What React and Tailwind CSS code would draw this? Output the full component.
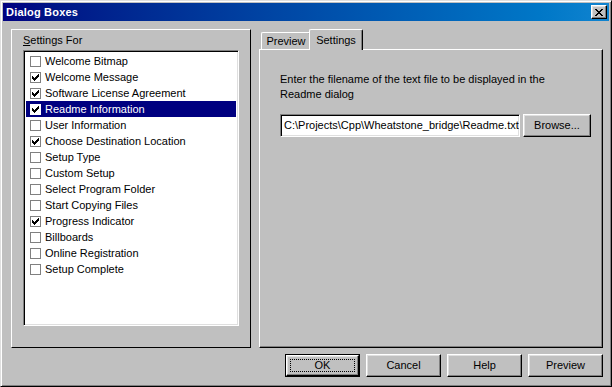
import React from 'react'

const items = [
  ['Welcome Bitmap', false],
  ['Welcome Message', true],
  ['Software License Agreement', true],
  ['Readme Information', true],
  ['User Information', false],
  ['Choose Destination Location', true],
  ['Setup Type', false],
  ['Custom Setup', false],
  ['Select Program Folder', false],
  ['Start Copying Files', false],
  ['Progress Indicator', true],
  ['Billboards', false],
  ['Online Registration', false],
  ['Setup Complete', false],
]

const raised = 'border border-t-white border-l-white border-r-black border-b-black shadow-[inset_-1px_-1px_#808080,inset_1px_1px_#dfdfdf]'
const sunken = 'border border-t-[#808080] border-l-[#808080] border-r-white border-b-white shadow-[inset_1px_1px_#000,inset_-1px_-1px_#dfdfdf]'

// 7x7 pixel checkmark, classic style
function Check({ color }) {
  const px = [
    [6, 0], [5, 1], [6, 1], [0, 2], [4, 2], [5, 2], [6, 2],
    [0, 3], [1, 3], [3, 3], [4, 3], [5, 3],
    [0, 4], [1, 4], [2, 4], [3, 4], [4, 4],
    [1, 5], [2, 5], [3, 5], [2, 6],
  ]
  return (
    <svg width="7" height="7" viewBox="0 0 7 7" shapeRendering="crispEdges">
      {px.map(([x, y]) => <rect key={x + '-' + y} x={x} y={y} width="1" height="1" fill={color} />)}
    </svg>
  )
}

function Row({ label, checked, selected }) {
  return (
    <div className={`h-[16px] flex items-center pl-[4px] gap-[4px] ${selected ? 'bg-[#000080] text-white' : 'text-black'}`}>
      <span className={`w-[11px] h-[11px] border bg-white flex items-center justify-center shrink-0 ${selected ? 'border-white' : 'border-[#808080]'}`}>
        {checked && <Check color="#000" />}
      </span>
      <span className="whitespace-nowrap leading-[16px]">{label}</span>
    </div>
  )
}

function Button({ children, width, isDefault }) {
  if (isDefault) {
    return (
      <div className={`h-[23px] border border-black ${width}`}>
        <div className={`h-full ${raised} flex items-center justify-center p-[3px]`}>
          <div className="w-full h-full border border-dotted border-black flex items-center justify-center">{children}</div>
        </div>
      </div>
    )
  }
  return (
    <div className={`h-[23px] ${raised} ${width} flex items-center justify-center`}>{children}</div>
  )
}

export default function App() {
  return (
    <div
      className="w-[612px] h-[387px] bg-[#c0c0c0] border border-t-[#dfdfdf] border-l-[#dfdfdf] border-r-black border-b-black shadow-[inset_1px_1px_#fff,inset_-1px_-1px_#808080] p-[2px] flex flex-col text-[11px] text-black"
      style={{ fontFamily: '"Liberation Sans", Arial, sans-serif' }}
    >
      {/* Title bar */}
      <div className="h-[18px] bg-linear-to-r from-[#000080] to-[#1084d0] flex items-center justify-between pl-[3px] pr-[2px]">
        <span className="text-white font-bold text-[11px] tracking-[0.2px]">Dialog Boxes</span>
        <div className={`w-[16px] h-[14px] ${raised} bg-[#c0c0c0] flex items-center justify-center`}>
          <svg width="8" height="7" viewBox="0 0 8 7" shapeRendering="crispEdges">
            <path d="M0 0h2v1h1v1h2v-1h1v-1h2v1h-1v1h-1v1h-1v1h1v1h1v1h1v1h-2v-1h-1v-1h-2v1h-1v1h-2v-1h1v-1h1v-1h1v-1h-1v-1h-1v-1h-1z" fill="#000" />
          </svg>
        </div>
      </div>

      <div className="flex flex-col pl-[8px] pr-[6px] pt-[8px]">
        <div className="flex gap-[8px]">
          {/* Settings For group */}
          <div className="w-[240px] h-[319px] border border-t-white border-l-white border-r-black border-b-black pl-[11px] pt-[3px]">
            <div className="h-[14px] leading-[14px] mb-[3px]">
              <span className="underline">S</span>ettings For
            </div>
            <div className={`w-[216px] h-[276px] bg-white ${sunken} p-[2px]`}>
              {items.map(([label, checked], i) => (
                <Row key={label} label={label} checked={checked} selected={i === 3} />
              ))}
            </div>
          </div>

          {/* Tabs */}
          <div className="w-[344px] h-[319px] flex flex-col">
            <div className="h-[20px] flex items-end pl-[2px]">
              <div className="w-[50px] h-[17px] border border-b-0 border-t-white border-l-white border-r-black rounded-t-[2px] shadow-[inset_-1px_0_#808080] flex items-center justify-center leading-none">
                Preview
              </div>
              <div className="relative z-10 -ml-[2px] -mb-[1px] w-[54px] h-[21px] bg-[#c0c0c0] border border-b-0 border-t-white border-l-white border-r-black rounded-t-[2px] shadow-[inset_-1px_0_#808080] flex items-start justify-center pt-[3px] leading-[14px]">
                Settings
              </div>
            </div>
            <div className="flex-1 border border-t-white border-l-white border-r-black border-b-black shadow-[inset_-1px_-1px_#808080] pl-[20px] pt-[22px]">
              <div className="leading-[15px] whitespace-nowrap">
                Enter the filename of the text file to be displayed in the
                <br />
                Readme dialog
              </div>
              <div className="flex items-center gap-[3px] mt-[12px]">
                <div className={`w-[240px] h-[23px] bg-white ${sunken} pl-[3px] pr-[2px] flex items-center overflow-hidden`}>
                  <span className="whitespace-nowrap">C:\Projects\Cpp\Wheatstone_bridge\Readme.txt</span>
                </div>
                <Button width="w-[68px]">Browse...</Button>
              </div>
            </div>
          </div>
        </div>

        {/* Bottom buttons */}
        <div className="flex justify-end gap-[6px] mt-[6px]">
          <Button width="w-[75px]" isDefault>OK</Button>
          <Button width="w-[75px]">Cancel</Button>
          <Button width="w-[75px]">Help</Button>
          <Button width="w-[75px]">Preview</Button>
        </div>
      </div>
    </div>
  )
}
